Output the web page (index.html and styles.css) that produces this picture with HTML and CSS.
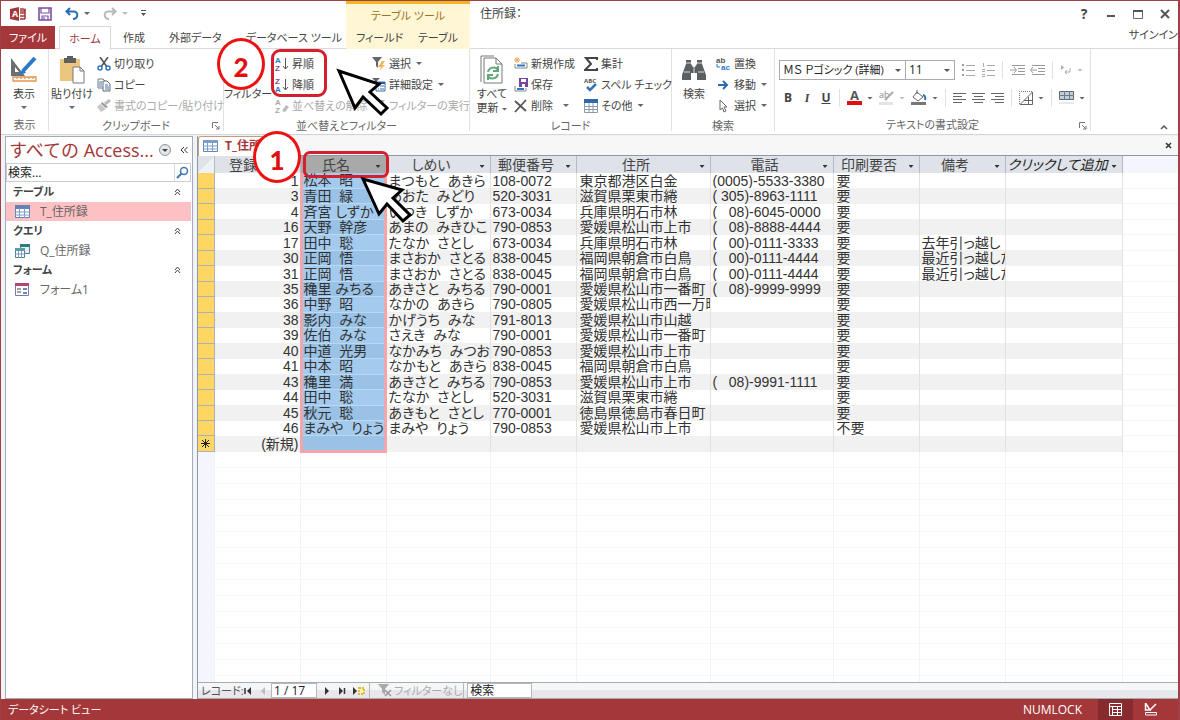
FILE: index.html
```html
<!DOCTYPE html>
<html lang="ja">
<head>
<meta charset="utf-8">
<title>住所録</title>
<link rel="stylesheet" href="styles.css">
</head>
<body>
<div class="window">
  <header class="top">
    <div class="quick">
      <svg class="app-logo" width="16" height="14" viewBox="0 0 16 14"><path d="M0 2 9 0V14L0 12Z" fill="#a4373a"/><text x="2" y="10" font-size="9" font-weight="700" fill="#fff" class="latin">A</text><path d="M10 2h3c3 0 3 2 0 2h-3M10 6h5M10 9h5M10 12h5M15 2V12" fill="none" stroke="#a4373a" stroke-width="1.5"/></svg>
      <button class="icon-btn" aria-label="保存"><svg width="14" height="14" viewBox="0 0 14 14"><path d="M1 1H13V13H1Z" fill="#fff" stroke="#7d4fa0" stroke-width="1.6"/><path d="M3 1V6H11V1M4 13V9H10V13M6 10v3" fill="none" stroke="#7d4fa0" stroke-width="1.2"/></svg></button>
      <button class="icon-btn has-arrow" aria-label="元に戻す"><svg width="14" height="14" viewBox="0 0 14 14"><path d="M5 1 1.500 4.500 5 8M2 4.500H9C14 5 13 12 8 12" fill="none" stroke="#2b6cb0" stroke-width="2"/></svg><i class="caret"></i></button>
      <button class="icon-btn has-arrow dim" aria-label="やり直し"><svg width="14" height="14" viewBox="0 0 14 14"><path d="M9 1 12.500 4.500 9 8M12 4.500H5C0 5 1 12 6 12" fill="none" stroke="#b8b8b8" stroke-width="2"/></svg><i class="caret"></i></button>
      <button class="icon-btn" aria-label="カスタマイズ"><svg width="7" height="7" viewBox="0 0 7 7"><path d="M1 .5H6" stroke="#555"/><path d="M1 3H6L3.500 6Z" fill="#555"/></svg></button>
    </div>
    <nav class="tabs">
      <button class="tab file">ファイル</button>
      <button class="tab active">ホーム</button>
      <button class="tab">作成</button>
      <button class="tab">外部データ</button>
      <button class="tab">データベース ツール</button>
    </nav>
    <div class="context">
      <div class="context-title">テーブル ツール</div>
      <div class="context-tabs"><button class="tab">フィールド</button><button class="tab">テーブル</button></div>
    </div>
    <div class="doc-title">住所録：</div>
    <div class="corner">
      <div class="win-buttons">
        <button aria-label="ヘルプ"><b class="latin">?</b></button>
        <button aria-label="最小化"><svg width="10" height="10"><path d="M1 7H9" stroke="#555" stroke-width="2"/></svg></button>
        <button aria-label="最大化"><svg width="10" height="10"><path d="M.5 1V9.500H9.500V1M0 1.500H10" fill="none" stroke="#666"/><path d="M0 2H10" stroke="#555" stroke-width="2"/></svg></button>
        <button aria-label="閉じる"><svg width="10" height="10"><path d="M1 1 9 9M9 1 1 9" stroke="#555" stroke-width="2"/></svg></button>
      </div>
      <a class="signin" href="#">サインイン</a>
    </div>
  </header>

  <section class="ribbon">
    <div class="group g-view">
      <div class="tools"><button class="big"><svg width="30" height="30" viewBox="0 0 30 30"><path d="M2 3V21H16ZM6 12V17H10Z" fill="#6a6f73" fill-rule="evenodd"/><path d="M26 3 14 16" stroke="#2b78c5" stroke-width="4"/><path d="M14 14 9 20 17 18Z" fill="#2b78c5"/><path d="M4 22H27V26H4ZM8 22v2M12 22v2M16 22v2M20 22v2M24 22v2" fill="#fff" stroke="#e8934a" stroke-width="1.300"/></svg><span>表示</span><i class="caret"></i></button></div>
      <div class="label">表示</div>
    </div>
    <div class="group g-clip">
      <div class="tools">
        <button class="big"><svg width="30" height="30" viewBox="0 0 30 30"><path d="M3 4H23V26H3Z" fill="#ecc67e"/><path d="M7 3H10V1H16V3H19V8H7Z" fill="#5f5f5f"/><path d="M16 12H23L27 16V28H16Z" fill="#fff" stroke="#777"/><path d="M23 12V16H27" fill="none" stroke="#777"/></svg><span>貼り付け</span><i class="caret"></i></button>
        <div class="stack">
          <button class="small"><svg width="14" height="14" viewBox="0 0 14 14"><path d="M3 0 10 10M11 0 4 10" stroke="#555" stroke-width="1.600"/><circle cx="3" cy="11" r="2" fill="none" stroke="#3673b5" stroke-width="1.500"/><circle cx="11" cy="11" r="2" fill="none" stroke="#3673b5" stroke-width="1.500"/></svg>切り取り</button>
          <button class="small"><svg width="14" height="14" viewBox="0 0 14 14"><path d="M1 1H6L8 3V10H1Z" fill="#fff" stroke="#777"/><path d="M6 3H10L13 6V13H6Z" fill="#fff" stroke="#666"/><path d="M2 4H5M2 6H5M2 8H5M8 7H11M8 9H12M8 11H12" stroke="#3b79bd"/></svg>コピー</button>
          <button class="small off"><svg width="14" height="14" viewBox="0 0 14 14"><path d="M13 1 8 5" stroke="#bbb" stroke-width="3"/><path d="M5 3 11 8 9 9 4 5Z" fill="#999"/><path d="M3 5 9 10 4 13 0 8Z" fill="#c8c8c8"/></svg>書式のコピー/貼り付け</button>
        </div>
      </div>
      <div class="label">クリップボード</div><svg class="launch" width="8" height="8"><path d="M.5 6V.5H6M3 3 7 7M7 4V7H4" fill="none" stroke="#777"/></svg>
    </div>
    <div class="group g-sort">
      <div class="tools">
        <button class="big"><svg width="30" height="30" viewBox="0 0 30 30"><path d="M4 4H26L17 14V26L13 22V14Z" fill="#666"/></svg><span>フィルター</span></button>
        <div class="stack">
          <button class="small"><svg width="14" height="16" viewBox="0 0 14 16"><text x="0" y="7" class="glyph blue">A</text><text x="0" y="15" class="glyph violet">Z</text><path d="M10.500 2V13M8 10 10.500 13 13 10" fill="none" stroke="#555"/></svg>昇順</button>
          <button class="small"><svg width="14" height="16" viewBox="0 0 14 16"><text x="0" y="7" class="glyph violet">Z</text><text x="0" y="15" class="glyph blue">A</text><path d="M10.500 2V13M8 10 10.500 13 13 10" fill="none" stroke="#555"/></svg>降順</button>
          <button class="small off"><svg width="14" height="16" viewBox="0 0 14 16"><text x="0" y="7" class="glyph gray">A</text><text x="0" y="15" class="glyph gray">Z</text><path d="M7 13 11 7 14 9 10 14Z" fill="#bbb"/></svg>並べ替えの解除</button>
        </div>
        <div class="stack">
          <button class="small"><svg width="14" height="14" viewBox="0 0 14 14"><path d="M0 0H10L6 5V11L4 9V5Z" fill="#666"/><path d="M10 4 6 10H9L7 14 13 8H10L13 4Z" fill="#f0b45a"/></svg>選択<i class="caret"></i></button>
          <button class="small"><svg width="14" height="14" viewBox="0 0 14 14"><path d="M0 0H8L5 3V7H3V3Z" fill="#666"/><path d="M4 4H13V13H4Z" fill="#fff" stroke="#3b6fa8"/><path d="M4 5H13" stroke="#2a62a2" stroke-width="2"/><path d="M6 8H7M8 8H12M6 11H7M8 11H12" stroke="#3b6fa8"/></svg>詳細設定<i class="caret"></i></button>
          <button class="small off"><svg width="14" height="14" viewBox="0 0 14 14"><path d="M1 1H13L8 7V13L6 11V7Z" fill="#aaa"/></svg>フィルターの実行</button>
        </div>
      </div>
      <div class="label">並べ替えとフィルター</div>
    </div>
    <div class="group g-rec">
      <div class="tools">
        <button class="big"><svg width="26" height="30" viewBox="0 0 26 30"><path d="M2 27V1H15" fill="none" stroke="#777"/><path d="M5 3H17L23 9V28H5Z" fill="#fff" stroke="#777"/><path d="M17 3V9H23" fill="none" stroke="#777"/><path d="M9 17C10 12 17 11 19 15M19 11V16H14M19 19C18 24 11 25 9 21M9 25V20H14" fill="none" stroke="#5fa878" stroke-width="2"/></svg><span>すべて</span><span>更新<i class="caret"></i></span></button>
        <div class="stack">
          <button class="small"><svg width="14" height="14" viewBox="0 0 14 14"><path d="M3 0V6M0 3H6M1 1 5 5M5 1 1 5" stroke="#e9a84c"/><path d="M1 7V11H13V6H7" fill="none" stroke="#888"/><path d="M3 8.500H11" stroke="#2b78c5" stroke-width="2"/></svg>新規作成</button>
          <button class="small"><svg width="14" height="14" viewBox="0 0 14 14"><path d="M1 8V13H12V10" fill="none" stroke="#888"/><path d="M3 11H10" stroke="#2b78c5" stroke-width="2"/><path d="M5 0H14V9H5Z" fill="#7446a0"/><path d="M7 1H12V4H7ZM8 6H11V9H8Z" fill="#fff"/></svg>保存</button>
          <button class="small wide"><svg width="14" height="14" viewBox="0 0 14 14"><path d="M1 2 12 12M12 1 1 13" stroke="#555" stroke-width="1.800"/></svg>削除<i class="caret"></i></button>
        </div>
        <div class="stack">
          <button class="small"><svg width="14" height="14" viewBox="0 0 14 14"><path d="M13 3V1H2L7 7 1 13H13V11" fill="none" stroke="#444" stroke-width="2"/></svg>集計</button>
          <button class="small"><svg width="14" height="14" viewBox="0 0 14 14"><text x="0" y="5" font-size="6" class="latin" font-weight="700" fill="#555">ABC</text><path d="M3 9 6 12 12 6" fill="none" stroke="#3673b5" stroke-width="2.500"/></svg>スペル チェック</button>
          <button class="small"><svg width="14" height="14" viewBox="0 0 14 14"><path d="M0 0H14V4H0Z" fill="#2d6aa8"/><path d="M.5 4V13.500H13.500V4M0 7.500H14M0 10.500H14M5 4V14M9 4V14" fill="none" stroke="#8a9aab"/></svg>その他<i class="caret"></i></button>
        </div>
      </div>
      <div class="label">レコード</div>
    </div>
    <div class="group g-find">
      <div class="tools">
        <button class="big"><svg width="26" height="30" viewBox="0 0 26 30"><path d="M5 5H10V9L12 12H14L16 9V5H21V9L25 20V25H16V18H10V25H1V20L5 9Z" fill="#5c5f61"/><path d="M5 8H10M16 8H21M13 12V18M3 17H9M17 17H23" stroke="#ddd"/></svg><span>検索</span></button>
        <div class="stack">
          <button class="small"><svg width="15" height="14" viewBox="0 0 15 14"><text x="0" y="6" class="glyph dark">ab</text><text x="5" y="13" class="glyph blue">ac</text><path d="M1 7V10H4" fill="none" stroke="#2b78c5"/></svg>置換</button>
          <button class="small"><svg width="15" height="14" viewBox="0 0 15 14"><path d="M2 7H11M7 3 11 7 7 11" fill="none" stroke="#2b6cb0" stroke-width="2"/></svg>移動<i class="caret"></i></button>
          <button class="small"><svg width="15" height="14" viewBox="0 0 15 14"><path d="M4 1V11L6.500 9 8 13 10 12 8 8H11Z" fill="#fff" stroke="#666"/></svg>選択<i class="caret"></i></button>
        </div>
      </div>
      <div class="label">検索</div>
    </div>
    <div class="group g-text">
      <div class="format">
        <div class="frow">
          <label class="pick font-name"><select aria-label="フォント"><option>ＭＳ Ｐゴシック (詳細)</option></select></label>
          <label class="pick font-size"><select aria-label="フォント サイズ"><option>11</option></select></label>
          <button aria-label="箇条書き"><svg width="13" height="14"><path d="M0 2H2M0 7H2M0 12H2" stroke="#999" stroke-width="2"/><path d="M4 2.500H13M4 7.500H13M4 12.500H13" stroke="#aaa"/></svg></button>
          <button aria-label="段落番号"><svg width="13" height="14"><path d="M1.500 0V4M0 6.500H3M0 8.500H3M0 11.500H3M0 13.500H3" stroke="#aaa"/><path d="M5 2.500H13M5 7.500H13M5 12.500H13" stroke="#aaa"/></svg></button>
          <i class="bar"></i>
          <button aria-label="インデント解除"><svg width="15" height="12"><path d="M2 1.500H15M8 4.500H15M8 7.500H15M2 10.500H15M0 6H6M4 3 6.500 6 4 9" fill="none" stroke="#999"/></svg></button>
          <button class="near" aria-label="インデント"><svg width="15" height="12"><path d="M2 1.500H15M8 4.500H15M8 7.500H15M2 10.500H15M1 6H7M3 3 .5 6 3 9" fill="none" stroke="#999"/></svg></button>
          <i class="bar"></i>
          <button class="dim" aria-label="文字列の方向"><svg width="12" height="12"><path d="M1 1V6L4 3.500Z" fill="#aaa"/><path d="M10 4V8H5M7 6 5 8 7 10" fill="none" stroke="#aaa"/></svg><i class="caret"></i></button>
        </div>
        <div class="frow second">
          <button class="letter"><b>B</b></button>
          <button class="letter"><em>I</em></button>
          <button class="letter"><u>U</u></button>
          <i class="bar"></i>
          <button aria-label="フォントの色"><svg width="15" height="16"><text x="3" y="10" font-size="13" font-weight="700" fill="#555" class="latin">A</text><path d="M0 11H15V15H0Z" fill="#e01010"/></svg><i class="caret"></i></button>
          <button class="dim" aria-label="蛍光ペン"><svg width="15" height="16"><text x="0" y="8" font-size="9" fill="#888" class="latin">ab</text><path d="M14 2 6 10" stroke="#aaa" stroke-width="2"/><path d="M0 12H14V15H0Z" fill="#e4e4e4"/></svg><i class="caret"></i></button>
          <button aria-label="背景色"><svg width="16" height="16"><path d="M6 2 12 7 7 11 2 7ZM6 4V0" fill="#fff" stroke="#666"/><path d="M12 5Q15 6 14 10" fill="none" stroke="#3673b5" stroke-width="2"/><path d="M0 12H15V15H0Z" fill="#777"/></svg><i class="caret"></i></button>
          <i class="bar"></i>
          <button aria-label="左揃え"><svg width="13" height="12"><path d="M0 1.500H13M0 4.500H9M0 7.500H13M0 10.500H9" stroke="#666"/></svg></button>
          <button aria-label="中央揃え"><svg width="13" height="12"><path d="M0 1.500H13M2 4.500H11M0 7.500H13M2 10.500H11" stroke="#666"/></svg></button>
          <button aria-label="右揃え"><svg width="13" height="12"><path d="M0 1.500H13M4 4.500H13M0 7.500H13M4 10.500H13" stroke="#666"/></svg></button>
          <i class="bar"></i>
          <button aria-label="枠線"><svg width="14" height="14"><path d="M.5 13V.5H13.500" fill="none" stroke="#777" stroke-dasharray="1 1"/><path d="M1 13.500H13.500V1ZM9.500 6V13M5 9.500H13" fill="none" stroke="#666"/></svg><i class="caret"></i></button>
          <i class="bar"></i>
          <button aria-label="交互の行の色"><svg width="15" height="16"><path d="M.5 1.500H14.500V9.500H.5Z" fill="#b7cee6" stroke="#666"/><path d="M5.500 1V10M10.500 1V10M0 5.500H15" stroke="#777"/><path d="M0 12H15V14H0Z" fill="#e8e8e8"/></svg><i class="caret"></i></button>
        </div>
      </div>
      <div class="label">テキストの書式設定</div><svg class="launch" width="8" height="8"><path d="M.5 6V.5H6M3 3 7 7M7 4V7H4" fill="none" stroke="#777"/></svg>
    </div>
    <button class="collapse" aria-label="リボンを折りたたむ"><svg width="8" height="6"><path d="M1 5 4 2 7 5" fill="none" stroke="#555" stroke-width="1.500"/></svg></button>
  </section>

  <main class="work">
    <aside class="nav">
      <div class="nav-title"><h1>すべての Access...</h1>
        <button aria-label="選択"><svg width="12" height="12"><circle cx="6" cy="6" r="5.500" fill="#e4e6ea" stroke="#8d929a"/><path d="M3 5H9L6 8Z" fill="#444"/></svg></button>
        <button aria-label="閉じる"><svg width="8" height="8"><path d="M4 1 1 4 4 7M7.500 1 4.500 4 7.500 7" fill="none" stroke="#333"/></svg></button></div>
      <div class="search"><input aria-label="検索" value="検索..."><button aria-label="検索する"><svg width="13" height="13"><circle cx="8" cy="5" r="3.500" fill="none" stroke="#3f74b5" stroke-width="1.500"/><path d="M5.500 7.500 1 12" stroke="#3f74b5" stroke-width="2"/></svg></button></div>
      <h2>テーブル<svg width="7" height="8"><path d="M1 4 3.500 1 6 4M1 7 3.500 4 6 7" fill="none" stroke="#444"/></svg></h2>
      <a class="obj on" href="#"><svg width="15" height="13"><path d="M.5.5H14.500V12.500H.5Z" fill="#fff" stroke="#5f83b5"/><path d="M0 0H15V4H0Z" fill="#5f83b5"/><path d="M0 7H15M0 10H15M4.500 3V13M9.500 3V13" stroke="#7d9cc8"/></svg>T_住所録</a>
      <h2>クエリ<svg width="7" height="8"><path d="M1 4 3.500 1 6 4M1 7 3.500 4 6 7" fill="none" stroke="#444"/></svg></h2>
      <a class="obj" href="#"><svg width="15" height="14"><path d="M5.500.5H14.500V9.500H5.500Z" fill="#e4eef2" stroke="#4b7f8a"/><path d="M5 0H15V3H5Z" fill="#2f7a7a"/><path d="M.5 4.500H9.500V13.500H.5Z" fill="#fff" stroke="#4b7f8a"/><path d="M0 4H10V7H0Z" fill="#58a0a0"/><path d="M0 10H10M3.500 7V14M6.500 7V14" stroke="#7d9cc8"/></svg>Q_住所録</a>
      <h2>フォーム<svg width="7" height="8"><path d="M1 4 3.500 1 6 4M1 7 3.500 4 6 7" fill="none" stroke="#444"/></svg></h2>
      <a class="obj" href="#"><svg width="15" height="13"><path d="M.5.5H13.500V12.500H.5Z" fill="#fff" stroke="#6f7fa8"/><path d="M0 0H14V3H0Z" fill="#b5446e"/><path d="M2 6H6M2 9H6" stroke="#444"/><path d="M8 5H12V7H8ZM8 9H12V11H8Z" fill="#6f86b8"/></svg>フォーム1</a>
    </aside>

    <section class="doc">
      <div class="doc-tabs"><div class="doc-tab"><svg width="15" height="12"><path d="M.5.5H14.500V11.500H.5Z" fill="#fff" stroke="#5f83b5"/><path d="M0 0H15V3H0Z" fill="#7d9cc8"/><path d="M0 6H15M0 9H15M4.500 3V12M9.500 3V12" stroke="#7d9cc8"/></svg>T_住所録</div>
        <button aria-label="閉じる"><svg width="7" height="7"><path d="M1 1 6 6M6 1 1 6" stroke="#333" stroke-width="1.500"/></svg></button></div>
      <table class="sheet">
        <colgroup><col class="c-sel"><col class="c-id"><col class="c-name"><col class="c-kana"><col class="c-zip"><col class="c-addr"><col class="c-tel"><col class="c-print"><col class="c-note"><col class="c-add"><col></colgroup>
        <thead><tr><th class="corner-cell"></th><th class="plain">登録番号</th><th class="picked"><span>氏名</span><i></i></th><th><span>しめい</span><i></i></th><th><span>郵便番号</span><i></i></th><th><span>住所</span><i></i></th><th><span>電話</span><i></i></th><th><span>印刷要否</span><i></i></th><th><span>備考</span><i></i></th><th class="add"><span>クリックして追加</span><i></i></th><th class="rest"></th></tr></thead>
        <tbody>
          <tr><td></td><td>1</td><td>松本&nbsp; 昭</td><td>まつもと&nbsp; あきら</td><td>108-0072</td><td>東京都港区白金</td><td>(0005)-5533-3380</td><td>要</td><td></td><td></td><td></td></tr>
          <tr><td></td><td>3</td><td>青田&nbsp; 緑</td><td>あおた&nbsp; みどり</td><td>520-3031</td><td>滋賀県栗東市綣</td><td>( 305)-8963-1111</td><td>要</td><td></td><td></td><td></td></tr>
          <tr><td></td><td>4</td><td>斉宮 しずか</td><td>いつき&nbsp; しずか</td><td>673-0034</td><td>兵庫県明石市林</td><td>(&nbsp;&nbsp; 08)-6045-0000</td><td>要</td><td></td><td></td><td></td></tr>
          <tr><td></td><td>16</td><td>天野&nbsp; 幹彦</td><td>あまの&nbsp; みきひこ</td><td>790-0853</td><td>愛媛県松山市上市</td><td>(&nbsp;&nbsp; 08)-8888-4444</td><td>要</td><td></td><td></td><td></td></tr>
          <tr><td></td><td>17</td><td>田中&nbsp; 聡</td><td>たなか&nbsp; さとし</td><td>673-0034</td><td>兵庫県明石市林</td><td>(&nbsp;&nbsp; 00)-0111-3333</td><td>要</td><td>去年引っ越し</td><td></td><td></td></tr>
          <tr><td></td><td>30</td><td>正岡&nbsp; 悟</td><td>まさおか&nbsp; さとる</td><td>838-0045</td><td>福岡県朝倉市白鳥</td><td>(&nbsp;&nbsp; 00)-0111-4444</td><td>要</td><td>最近引っ越した</td><td></td><td></td></tr>
          <tr><td></td><td>31</td><td>正岡&nbsp; 悟</td><td>まさおか&nbsp; さとる</td><td>838-0045</td><td>福岡県朝倉市白鳥</td><td>(&nbsp;&nbsp; 00)-0111-4444</td><td>要</td><td>最近引っ越した</td><td></td><td></td></tr>
          <tr><td></td><td>35</td><td>穐里 みちる</td><td>あきさと&nbsp; みちる</td><td>790-0001</td><td>愛媛県松山市一番町</td><td>(&nbsp;&nbsp; 08)-9999-9999</td><td>要</td><td></td><td></td><td></td></tr>
          <tr><td></td><td>36</td><td>中野&nbsp; 昭</td><td>なかの&nbsp; あきら</td><td>790-0805</td><td>愛媛県松山市西一万町</td><td></td><td>要</td><td></td><td></td><td></td></tr>
          <tr><td></td><td>38</td><td>影内&nbsp; みな</td><td>かげうち&nbsp; みな</td><td>791-8013</td><td>愛媛県松山市山越</td><td></td><td>要</td><td></td><td></td><td></td></tr>
          <tr><td></td><td>39</td><td>佐伯&nbsp; みな</td><td>さえき&nbsp; みな</td><td>790-0001</td><td>愛媛県松山市一番町</td><td></td><td>要</td><td></td><td></td><td></td></tr>
          <tr><td></td><td>40</td><td>中道&nbsp; 光男</td><td>なかみち&nbsp; みつお</td><td>790-0853</td><td>愛媛県松山市上市</td><td></td><td>要</td><td></td><td></td><td></td></tr>
          <tr><td></td><td>41</td><td>中本&nbsp; 昭</td><td>なかもと&nbsp; あきら</td><td>838-0045</td><td>福岡県朝倉市白鳥</td><td></td><td>要</td><td></td><td></td><td></td></tr>
          <tr><td></td><td>43</td><td>穐里&nbsp; 満</td><td>あきさと&nbsp; みちる</td><td>790-0853</td><td>愛媛県松山市上市</td><td>(&nbsp;&nbsp; 08)-9991-1111</td><td>要</td><td></td><td></td><td></td></tr>
          <tr><td></td><td>44</td><td>田中&nbsp; 聡</td><td>たなか&nbsp; さとし</td><td>520-3031</td><td>滋賀県栗東市綣</td><td></td><td>要</td><td></td><td></td><td></td></tr>
          <tr><td></td><td>45</td><td>秋元&nbsp; 聡</td><td>あきもと&nbsp; さとし</td><td>770-0001</td><td>徳島県徳島市春日町</td><td></td><td>要</td><td></td><td></td><td></td></tr>
          <tr><td></td><td>46</td><td>まみや&nbsp; りょう</td><td>まみや&nbsp; りょう</td><td>790-0853</td><td>愛媛県松山市上市</td><td></td><td>不要</td><td></td><td></td><td></td></tr>
          <tr class="new"><td><svg width="9" height="9"><path d="M4.500 0V9M0 4.500H9M1 1 8 8M8 1 1 8" stroke="#222"/></svg></td><td>(新規)</td><td></td><td></td><td></td><td></td><td></td><td></td><td></td><td></td><td></td></tr>
        </tbody>
      </table>
      <div class="blank"><i></i><i></i><i></i><i></i><i></i><i></i><i></i><i></i><i></i><i></i><i></i></div>
      <div class="records">
        <span class="rec-label">レコード:</span>
        <button aria-label="先頭"><svg width="8" height="8"><path d="M1 1V7" stroke="#333" stroke-width="1.500"/><path d="M7 0V8L3 4Z" fill="#333"/></svg></button>
        <button aria-label="前"><svg width="8" height="8"><path d="M6 0V8L2 4Z" fill="#bbb"/></svg></button>
        <input class="rec-no" aria-label="レコード番号" value="1 / 17">
        <button aria-label="次"><svg width="8" height="8"><path d="M2 0V8L6 4Z" fill="#333"/></svg></button>
        <button aria-label="最終"><svg width="8" height="8"><path d="M1 0V8L5 4Z" fill="#333"/><path d="M6.500 1V7" stroke="#333" stroke-width="1.500"/></svg></button>
        <button aria-label="新規"><svg width="12" height="8"><path d="M0 0V8L4 4Z" fill="#333"/><path d="M6 1H11V7H6Z" fill="#fff3b0" stroke="#e3b93a" stroke-width="2" stroke-dasharray="2 1"/></svg></button>
        <button class="no-filter"><svg width="14" height="13"><path d="M0 0H11L7 5V11L4 8V5Z" fill="#aaa"/><path d="M7 6 13 12M13 6 7 12" stroke="#999" stroke-width="1.500"/></svg>フィルターなし</button>
        <input class="rec-find" aria-label="レコード検索" value="検索">
      </div>
    </section>
  </main>

  <footer class="status"><span>データシート ビュー</span><span class="numlock">NUMLOCK</span>
    <button class="on" aria-label="データシート ビュー"><svg width="13" height="13"><path d="M.5.5H12.500V12.500H.5ZM0 3.500H13M3.500 3V13M8.500 3V13M3 6.500H13M3 9.500H13" fill="none" stroke="#fff"/></svg></button>
    <button aria-label="デザイン ビュー"><svg width="14" height="13"><path d="M1.500 0V7H6ZM12 1 6 7" fill="none" stroke="#fff" stroke-width="1.500"/><path d="M1.500 9.500H12.500V12H1.500Z" fill="none" stroke="#fff"/></svg></button>
  </footer>

  <div class="pick-column"></div>
  <div class="frame frame-field"></div>
  <div class="frame frame-sort"></div>
  <div class="badge badge-one">1</div>
  <div class="badge badge-two">2</div>
  <svg class="pointer pointer-one" width="54" height="50"><path d="M3 3 19 38 27 28 43 45 50 39 33 22 42 14Z" fill="#fff" stroke="#000" stroke-width="3"/></svg>
  <svg class="pointer pointer-two" width="54" height="50"><path d="M3 3 19 40 27 29 45 46 51 40 34 24 43 16Z" fill="#fff" stroke="#000" stroke-width="3"/></svg>
</div>
</body>
</html>
```
FILE: styles.css
```css
* { box-sizing: border-box; }
body { margin: 0; font: 11px/16px "Open Sans", "Noto Sans CJK JP", sans-serif; font-feature-settings: "palt"; color: #444; background: #fff; }
button { font: inherit; font-feature-settings: inherit; color: inherit; border: 0; background: none; padding: 0; display: flex; flex: none; align-items: center; justify-content: center; white-space: nowrap; }
input, select { font: inherit; font-size: 12px; font-feature-settings: inherit; border-radius: 0; }
a { color: inherit; text-decoration: none; }
svg { display: block; flex: none; }
.latin { font-family: "Open Sans", sans-serif; }
.glyph { font: 700 8px "Liberation Sans", sans-serif; }
.blue { fill: #2b78c5; } .violet { fill: #7d4fa0; } .gray { fill: #aaa; } .dark { fill: #555; }
.caret { display: inline-block; flex: none; width: 6px; height: 3px; margin-left: 5px; background: #666; clip-path: polygon(0 0, 100% 0, 50% 100%); vertical-align: middle; }
.dim .caret { background: #bbb; }

.window { position: relative; height: 100vh; display: flex; flex-direction: column; border: solid #9d4048; border-width: 1px 2px 0 1px; overflow: hidden; }

.top { height: 48px; display: grid; grid-template: 25px 23px / 345px 124px auto 1fr; border-bottom: 1px solid #d9d9d9; flex: none; }
.quick { display: flex; align-items: center; padding-left: 9px; }
.quick .icon-btn { margin-left: 12px; }
.quick .has-arrow { margin-left: 13px; }
.tabs { grid-row: 2; grid-column: 1; display: flex; }
.tab { height: 23px; padding-top: 1px; }
.tabs .tab { padding: 0 12px; }
.tabs .file { width: 54px; background: #a4373a; color: #fff; padding: 0; }
.tabs .active { width: 52px; margin-left: 4px; height: 24px; padding: 0; color: #a4373a; background: #fff; border: 1px solid #d9d9d9; border-bottom: 0; }
.context { grid-column: 2; grid-row: 1 / 3; background: #fff6d5; border-top: 3px solid #f2b824; display: flex; flex-direction: column; }
.context-title { height: 22px; line-height: 23px; text-align: center; color: #9a7420; }
.context-tabs { display: flex; justify-content: space-between; padding: 0 12px 0 10px; }
.doc-title { grid-column: 3; grid-row: 1; padding-left: 10px; font-size: 12px; line-height: 26px; }
.corner { grid-column: 4; grid-row: 1 / 3; display: flex; flex-direction: column; align-items: flex-end; }
.win-buttons { display: flex; height: 26px; padding-right: 8px; gap: 17px; }
.win-buttons button { min-width: 10px; font-size: 14px; }

.ribbon { height: 86px; display: flex; border-bottom: 1px solid #d4d4d4; flex: none; }
.group { position: relative; border-right: 1px solid #e1e1e1; margin-bottom: 3px; padding-top: 4px; display: flex; flex-direction: column; flex: none; }
.tools { display: flex; height: 63px; align-items: flex-start; }
.label { text-align: center; line-height: 20px; height: 16px; color: #666; }
.launch { position: absolute; right: 3px; bottom: 1px; }
.big { flex-direction: column; padding-top: 2px; line-height: 14px; }
.big svg { margin-bottom: 2px; }
.big > .caret { margin: 5px 0 0; }
.big span .caret { margin-left: 3px; }
.stack { display: flex; flex-direction: column; align-items: flex-start; }
.small { height: 21px; gap: 3px; }
.small .caret { margin-left: 2px; }
.small.wide .caret { margin-left: 7px; }
.off { color: #aaa; }
.g-view { width: 48px; } .g-view .big { width: 46px; }
.g-clip { width: 175px; } .g-clip .big { width: 46px; } .g-clip .stack { margin-left: 2px; }
.g-sort { width: 246px; } .g-sort .big { width: 48px; } .g-sort .stack { margin-left: 3px; width: 94px; }
.g-rec { width: 202px; } .g-rec .big { width: 44px; } .g-rec .stack { width: 70px; }
.g-find { width: 103px; } .g-find .big { width: 44px; }
.g-text { width: 316px; }
.collapse { margin: auto 10px 4px auto; }

.format { height: 63px; padding-left: 4px; }
.frow { display: flex; align-items: center; height: 34px; gap: 7px; }
.frow.second { height: 22px; padding-left: 3px; }
.frow .caret { margin-left: 5px; }
.near { margin-left: -2px; }
.pick { position: relative; height: 20px; border: 1px solid #ababab; background: #fff; flex: none; }
.pick::after { content: ""; position: absolute; right: 4px; top: 8px; width: 6px; height: 3px; background: #555; clip-path: polygon(0 0, 100% 0, 50% 100%); }
.pick select { appearance: none; border: 0; background: none; width: 100%; height: 18px; padding: 0 3px; color: #222; font-size: 11px; }
.font-name { width: 127px; } .font-size { width: 50px; margin-left: -8px; }
.font-size select { font-size: 12px; }
.bar { width: 1px; height: 18px; background: #e1e1e1; flex: none; }
.letter { width: 12px; font-family: "Open Sans", sans-serif; font-size: 12px; }
.letter em { font-family: "Liberation Serif", serif; font-weight: 700; }
.letter u { font-weight: 700; }
.second button:not(.letter) + button { margin-left: -1px; }

.work { flex: 1; min-height: 0; display: flex; padding-top: 1px; background: #f1f3f6; }
.nav { width: 188px; margin-left: 4px; background: #fff; border: 1px solid #a3adba; flex: none; font-size: 12px; }
.nav-title { display: flex; align-items: center; height: 26px; padding: 0 4px 0 3px; gap: 9px; }
.nav-title h1 { margin: 0; flex: 1; font: 18px/26px "Open Sans", "Noto Sans CJK JP", sans-serif; color: #a4373a; white-space: nowrap; }
.nav-title h1 + button { margin-left: -9px; }
.search { display: flex; height: 19px; border: 1px solid #c9cdd4; margin-right: 1px; }
.search input { flex: 1; min-width: 0; border: 0; padding: 0 1px; color: #222; }
.search button { width: 16px; border-left: 1px solid #d5d9df; }
.nav h2 { display: flex; justify-content: space-between; align-items: center; height: 20px; margin: 0; padding: 0 11px 0 7px; font-size: 11px; line-height: 20px; }
.obj { display: flex; align-items: center; height: 19px; gap: 10px; padding-left: 9px; margin-right: 1px; color: #666; }
.obj.on { background: #fdc1c4; }

.doc { flex: 1; min-width: 0; margin-left: 4px; display: flex; flex-direction: column; background: #fff; border-left: 1px solid #8e98a6; }
.doc-tabs { display: flex; justify-content: space-between; align-items: center; height: 20px; background: #f7f7f8; border-bottom: 1px solid #8e98a6; padding-right: 6px; flex: none; }
.doc-tab { display: flex; align-items: center; gap: 7px; height: 20px; padding: 0 4px; border: 1px solid #c89a7a; border-bottom: 0; border-radius: 3px 3px 0 0; background: #fff; color: #a4373a; font-size: 12px; font-weight: 700; }

.sheet { width: 100%; height: 296px; table-layout: fixed; border-collapse: collapse; font: 14px/14px "Liberation Sans", "Noto Sans CJK JP", sans-serif; font-feature-settings: "palt"; flex: none; color: #333; }
.c-sel { width: 16px; } .c-id, .c-name, .c-zip, .c-print, .c-note { width: 86px; } .c-kana { width: 104px; } .c-addr { width: 134px; } .c-tel { width: 123px; } .c-add { width: 117px; }
.sheet th, .sheet td { padding: 0 2px; white-space: nowrap; overflow: hidden; height: 15px; }
.sheet th { position: relative; height: 17px; background: #dfe3e9; border-right: 1px solid #b4bac4; font-weight: 400; padding-right: 16px; color: #444; }
.sheet th i { position: absolute; right: 5px; bottom: 5px; width: 5px; height: 3px; background: #333; clip-path: polygon(0 0, 100% 0, 50% 100%); }
.sheet th.plain { padding: 0; }
.sheet th.picked { background: #a9a9a9; }
.sheet th.add { font-style: italic; color: #222; }
.sheet th.rest { background: #f5f6fd; border: 0; }
.sheet th.corner-cell { padding: 0; background: linear-gradient(135deg, #dfe3e9 50%, #eef1f5 50%); }
.sheet td { border-right: 1px solid #e2e2e2; }
.sheet tbody tr:nth-child(even) { background: #f1f1f1; }
.sheet tbody td:first-child { background: #fdd663; border-bottom: 1px solid #a9b2b8; border-right-color: #a9b2b8; padding: 0 3px; }
.sheet td:nth-child(2) { text-align: right; padding-right: 1px; }
.sheet td:nth-child(3) { background: #a4cbee; border-bottom: 1px solid #b9d8f2; padding-left: 3px; }
.sheet tr:nth-child(even) td:nth-child(3) { background: #99c2e6; }
.sheet td:nth-child(8), .sheet td:nth-child(6) { padding-left: 3px; }
.sheet tbody td:last-child { background: #fff; border-right: 0; border-bottom: 1px solid #f6f6fa; }
.blank { flex: 1; min-height: 0; display: grid; grid-template-columns: 17px 86px 86px 104px 86px 134px 123px 86px 86px 117px 1fr; background: repeating-linear-gradient(#fff 0 15px, #f8f8fb 15px 16px); }
.blank i { border-right: 1px solid #f3f3f6; }
.blank i:first-child { background: #f5f6fd; }
.blank i:last-child { border: 0; }

.records { display: flex; align-items: center; height: 17px; flex: none; background: linear-gradient(#f5f6f7 50%, #e6e8eb 50%); border-top: 1px solid #a8abb0; border-bottom: 1px solid #a8abb0; color: #555; }
.records button { height: 15px; margin-right: 7px; }
.rec-label { width: 44px; padding-left: 3px; margin-right: 2px; white-space: nowrap; }
.records input { height: 15px; border: 1px solid #b5b9bf; padding: 0 2px; color: #222; }
.rec-no { width: 46px; margin: 0 6px 0 -3px; }
.records .no-filter { color: #aaa; gap: 2px; padding: 0 1px 0 8px; margin: 0 3px 0 -3px; border: solid #b5b9bf; border-width: 0 1px; }
.rec-find { width: 65px; }

.status { height: 21px; flex: none; display: flex; align-items: center; padding: 0 10px 0 7px; background: #a4373a; color: #fff; }
.numlock { margin-left: auto; margin-right: 16px; font-size: 12px; }
.status button { width: 35px; height: 21px; }
.status .on { background: #872b2f; }

.pick-column { position: absolute; left: 299px; top: 172px; width: 87px; height: 280px; border: 3px solid #f3a5ac; border-top: 0; }
.frame { position: absolute; border: 3px solid #d3202c; border-radius: 7px; }
.frame-field { left: 302px; top: 150px; width: 86px; height: 27px; }
.frame-sort { left: 270px; top: 48px; width: 56px; height: 48px; border-radius: 9px; }
.badge { position: absolute; width: 48px; height: 52px; border: 3px solid #ee1111; border-radius: 50%; background: #fff; color: #e01010; font: 900 26px/52px Lato, sans-serif; text-align: center; }
.badge-one { left: 252px; top: 130px; }
.badge-two { left: 216px; top: 37px; }
.pointer { position: absolute; }
.pointer-one { left: 359px; top: 175px; }
.pointer-two { left: 335px; top: 67px; }
```
